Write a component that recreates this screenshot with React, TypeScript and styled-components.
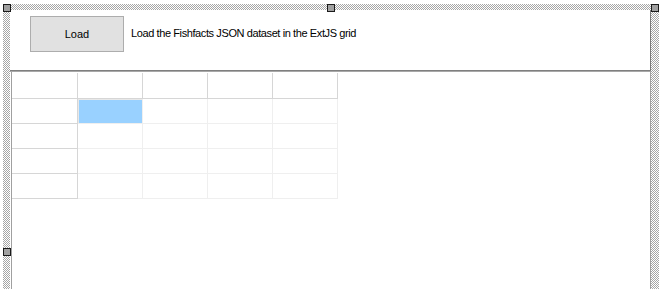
import React from 'react'
import styled, { createGlobalStyle } from 'styled-components'

const Global = createGlobalStyle`
  html, body {
    margin: 0;
    padding: 0;
    background: #ffffff;
    overflow: hidden;
  }
  body {
    font-family: Tahoma, "Liberation Sans", Arial, sans-serif;
  }
`

const hatch = `repeating-conic-gradient(#a6a6a6 0 25%, #ffffff 0 50%) 0 0 / 2px 2px`

const Stage = styled.div`
  position: relative;
  width: 665px;
  height: 289px;
  overflow: hidden;
  background: #ffffff;
`

const Selection = styled.div`
  position: relative;
  margin: 4px 0 0 3px;
  width: 656px;
  height: 500px;
  box-sizing: border-box;
  padding: 6px 8px 0 7px;
  background: ${hatch};
`

const Form = styled.div`
  display: flex;
  flex-direction: column;
  height: 100%;
  background: #ffffff;
`

const TopPanel = styled.div`
  display: flex;
  align-items: flex-start;
  gap: 7px;
  height: 61px;
  box-sizing: border-box;
  padding: 6px 0 0 20px;
  border-right: 1px solid #7a7a7a;
  border-bottom: 1px solid #7f7f7f;
  box-shadow: 0 1px 0 #a8a8a8;
`

const Button = styled.button`
  width: 94px;
  height: 36px;
  box-sizing: border-box;
  border: 1px solid #adadad;
  background: #e1e1e1;
  color: #000;
  font-family: inherit;
  font-size: 11px;
  padding: 0;
`

const Caption = styled.span`
  font-size: 11px;
  letter-spacing: -0.4px;
  color: #000;
  margin-top: 11px;
`

const GridPanel = styled.div`
  flex: 1;
  margin: 1px 0 0 1px;
  border-left: 1px solid #a0a0a0;
  border-right: 1px solid #a0a0a0;
  background: #ffffff;
`

const Grid = styled.div`
  display: grid;
  grid-template-columns: 66px repeat(4, 65px);
  grid-template-rows: 26px repeat(4, 25px);
  padding-top: 1px;
`

const Cell = styled.div<{ $head?: boolean; $selected?: boolean }>`
  box-sizing: border-box;
  border-right: 1px solid ${(p) => (p.$head ? '#d6d6d6' : '#efefef')};
  border-bottom: 1px solid ${(p) => (p.$head ? '#d6d6d6' : '#efefef')};
  background: ${(p) => (p.$selected ? '#99d1ff' : '#ffffff')};
  ${(p) => (p.$selected ? 'box-shadow: inset 1px 1px 0 #e8e8e8;' : '')}
`

const Handle = styled.div<{ $x: number; $y: number }>`
  position: absolute;
  left: ${(p) => p.$x}px;
  top: ${(p) => p.$y}px;
  width: 8px;
  height: 8px;
  box-sizing: border-box;
  border: 1px solid #1a1a1a;
  background: #a0a0a0;
`

const handles = [
  [3, 4],
  [327, 4],
  [651, 4],
  [3, 248],
]

export default function App() {
  const rows = [0, 1, 2, 3, 4]
  const cols = [0, 1, 2, 3, 4]
  return (
    <Stage>
      <Global />
      <Selection>
        <Form>
          <TopPanel>
            <Button>Load</Button>
            <Caption>Load the Fishfacts JSON dataset in the ExtJS grid</Caption>
          </TopPanel>
          <GridPanel>
            <Grid>
              {rows.map((r) =>
                cols.map((c) => (
                  <Cell key={`${r}-${c}`} $head={r === 0 || c === 0} $selected={r === 1 && c === 1} />
                ))
              )}
            </Grid>
          </GridPanel>
        </Form>
      </Selection>
      {handles.map(([x, y]) => (
        <Handle key={`${x}-${y}`} $x={x} $y={y} />
      ))}
    </Stage>
  )
}
